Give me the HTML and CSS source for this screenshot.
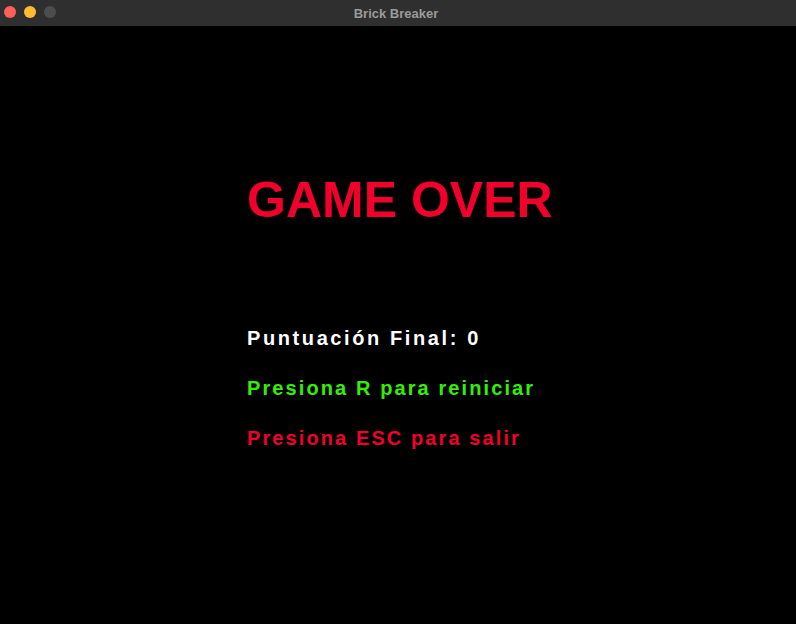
FILE: index.html
```html
<!DOCTYPE html>
<html>
<head>
<meta charset="utf-8">
<link rel="stylesheet" href="styles.css">
</head>
<body>
<div class="window">
  <div class="titlebar">
    <div class="lights">
      <span class="light red"></span>
      <span class="light yellow"></span>
      <span class="light gray"></span>
    </div>
    <div class="title">Brick Breaker</div>
  </div>
  <div class="game">
    <div class="over">GAME OVER</div>
    <div class="line score">Puntuación Final: 0</div>
    <div class="line restart">Presiona R para reiniciar</div>
    <div class="line quit">Presiona ESC para salir</div>
  </div>
</div>
</body>
</html>
```
FILE: styles.css
```css
html, body {
  margin: 0;
  padding: 0;
  background: #000;
}
.window {
  width: 796px;
  height: 624px;
  background: #000;
  border-radius: 0 0 10px 10px;
  overflow: hidden;
  display: flex;
  flex-direction: column;
}
.titlebar {
  height: 26px;
  background: #2f2f2f;
  position: relative;
  display: flex;
  align-items: center;
  justify-content: center;
  flex-shrink: 0;
}
.lights {
  position: absolute;
  left: 4px;
  top: 6px;
  display: flex;
  gap: 8px;
}
.light {
  width: 12px;
  height: 12px;
  border-radius: 50%;
}
.light.red { background: #fe5f57; }
.light.yellow { background: #febc2e; }
.light.gray { background: #4d4d4d; }
.title {
  font-family: "Liberation Sans", Arial, sans-serif;
  font-weight: bold;
  font-size: 13px;
  color: #9b9b9b;
  margin-left: -4px;
}
.game {
  flex: 1;
  display: flex;
  flex-direction: column;
  align-items: flex-start;
  padding-left: 247px;
  font-family: "Liberation Sans", Arial, sans-serif;
  font-weight: bold;
}
.over {
  font-size: 50px;
  line-height: 50px;
  color: #f0002a;
  margin-top: 149px;
}
.line {
  font-size: 20px;
  line-height: 24px;
  letter-spacing: 2.1px;
  height: 50px;
}
.score {
  margin-top: 101px;
  color: #ffffff;
  letter-spacing: 2.6px;
}
.restart { color: #33f000; }
.quit { color: #f0002a; }
```
